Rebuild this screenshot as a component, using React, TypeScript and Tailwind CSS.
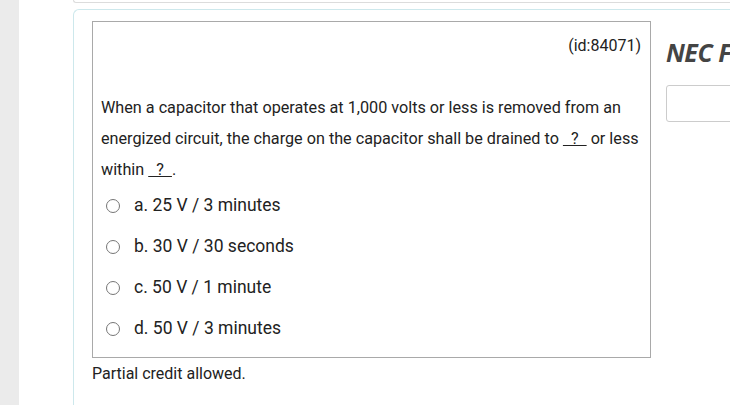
export default function App() {
  const options = [
    "a. 25 V / 3 minutes",
    "b. 30 V / 30 seconds",
    "c. 50 V / 1 minute",
    "d. 50 V / 3 minutes",
  ];

  return (
    <div className="flex h-[405px] w-[730px] overflow-hidden bg-white font-['Roboto',sans-serif] text-[#222]">
      <div className="w-[19px] shrink-0 bg-[#ebebeb]" />
      <div className="flex-1 min-w-0">
        {/* bottom of previous card */}
        <div className="ml-[54px] h-[3px] w-[800px] rounded-bl-[4px] border-b border-l border-[#dcdcdc]" />
        <div className="ml-[54px] mt-[6px] h-[400px] w-[800px] rounded-tl-[6px] border-l border-t border-[#cde8ec] pl-[18px] pt-[11px]">
          <div className="flex">
            <div className="w-[559px] shrink-0">
              <div className="h-[337px] border border-[#a9a9a9] pl-[8px] pr-[9px] pt-[12px]">
                <div className="text-right text-[16px] leading-[24px]">(id:84071)</div>
                <p className="mt-[34px] text-[16.2px] leading-[31px]">
                  When a capacitor that operates at 1,000 volts or less is removed from an energized circuit, the charge on the capacitor shall be drained to{" "}
                  <span className="underline">&nbsp;&nbsp;?&nbsp;&nbsp;</span> or less within{" "}
                  <span className="underline">&nbsp;&nbsp;?&nbsp;&nbsp;</span>.
                </p>
                <div>
                  {options.map((o) => (
                    <label key={o} className="flex h-[41px] items-center pl-[5px]">
                      <span className="h-[14px] w-[14px] shrink-0 rounded-full border border-[#767676] bg-white" />
                      <span className="ml-[14px] text-[17.5px]">{o}</span>
                    </label>
                  ))}
                </div>
              </div>
              <div className="mt-[4px] text-[16px] leading-[24px]">Partial credit allowed.</div>
            </div>
            <div className="ml-[15px] flex-1">
              <div className="mt-[14px] whitespace-nowrap font-['Open_Sans',sans-serif] text-[25px] font-bold italic leading-[34px] tracking-[-0.5px] text-[#444]">
                NEC Fundamentals
              </div>
              <div className="mt-[16px] h-[37px] w-[200px] rounded-[3px] border border-[#cccccc]" />
            </div>
          </div>
        </div>
      </div>
    </div>
  );
}
